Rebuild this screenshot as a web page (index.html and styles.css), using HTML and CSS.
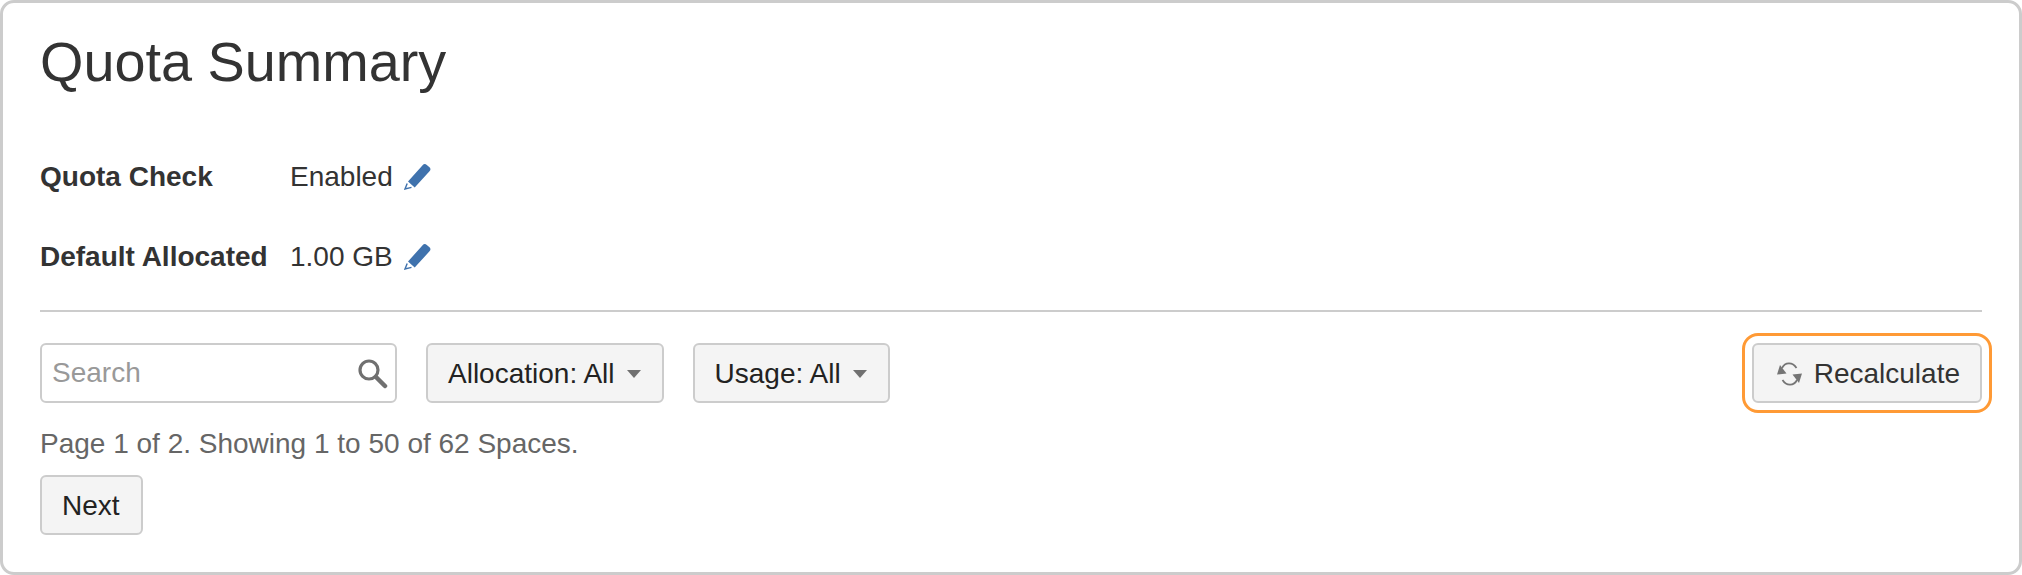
FILE: index.html
```html
<!DOCTYPE html>
<html lang="en">
<head>
  <meta charset="UTF-8" />
  <title>Quota Summary</title>
  <link rel="stylesheet" href="styles.css">
</head>
<body>
  <div class="panel">
    <h1>Quota Summary</h1>

    <div class="settings">
      <div class="setting">
        <span class="label">Quota Check</span>
        <span class="value">Enabled</span>
        <svg class="pencil" viewBox="0 0 27 26"><path d="M4 17.5 18.6 1.3a3 3 0 0 1 4.2-.3l2.4 2a3 3 0 0 1 .3 4.3L10.7 23.6Z" fill="#3f72ad"/><path d="M3.2 19.5 1 25l6.500-1.600" fill="none" stroke="#3f72ad" stroke-width="1.400"/></svg>
      </div>
      <div class="setting">
        <span class="label">Default Allocated</span>
        <span class="value">1.00 GB</span>
        <svg class="pencil" viewBox="0 0 27 26"><path d="M4 17.5 18.6 1.3a3 3 0 0 1 4.2-.3l2.4 2a3 3 0 0 1 .3 4.3L10.7 23.6Z" fill="#3f72ad"/><path d="M3.2 19.5 1 25l6.500-1.600" fill="none" stroke="#3f72ad" stroke-width="1.400"/></svg>
      </div>
    </div>

    <hr>

    <div class="toolbar">
      <div class="search">
        <input type="text" placeholder="Search">
        <svg class="search-icon" viewBox="0 0 30 30"><circle cx="11" cy="11" r="9" fill="none" stroke="#707070" stroke-width="3.200"/><path d="M18 18 27 27" stroke="#707070" stroke-width="4.500" stroke-linecap="round"/></svg>
      </div>
      <button class="btn">Allocation: All<span class="caret"></span></button>
      <button class="btn">Usage: All<span class="caret"></span></button>
      <button class="btn recalc">
        <svg class="refresh" viewBox="0 0 25 24"><path d="M19.500 6C15.500 -0.500 8 0 5 6" fill="none" stroke="#757575" stroke-width="1.700"/><path d="M0 12.500 9.500 11.500 3 3Z" fill="#757575"/><path d="M5.500 18C9.500 24.500 17 24 20 18" fill="none" stroke="#757575" stroke-width="1.700"/><path d="M25 11.500 15.500 12.500 22 21Z" fill="#757575"/></svg>
        Recalculate
      </button>
    </div>

    <p class="page-info">Page 1 of 2. Showing 1 to 50 of 62 Spaces.</p>
    <button class="btn">Next</button>
  </div>
</body>
</html>
```

FILE: styles.css
```css
* {
  box-sizing: border-box;
}
body {
  margin: 0;
  font-family: "Liberation Sans", Arial, sans-serif;
  font-size: 28px;
  color: #333;
  background: white;
}
.panel {
  height: 575px;
  border: 3px solid #ccc;
  border-radius: 14px;
  padding: 0 37px;
}
h1 {
  margin: 0;
  padding-top: 27px;
  font-size: 55.8px;
  font-weight: normal;
  line-height: 64px;
}
.settings {
  margin-top: 43px;
}
.setting {
  display: flex;
  align-items: center;
  height: 80px;
}
.label {
  width: 250px;
  font-weight: bold;
}
.pencil {
  width: 27px;
  height: 26px;
  margin-left: 11px;
}
hr {
  height: 2px;
  margin: 13px 0 31px;
  border: none;
  background: #ccc;
}
.toolbar {
  display: flex;
  gap: 29px;
}
.search {
  position: relative;
  width: 357px;
}
.search input {
  width: 100%;
  height: 60px;
  padding: 0 10px;
  border: 2px solid #ccc;
  border-radius: 6px;
  font: inherit;
  outline: none;
}
.search input::placeholder {
  color: #999;
}
.search-icon {
  position: absolute;
  right: 9px;
  top: 16px;
  width: 30px;
  height: 30px;
}
.btn {
  display: inline-flex;
  align-items: center;
  height: 60px;
  padding: 1px 21px 0 20px;
  border: 2px solid #ccc;
  border-radius: 6px;
  background: #f4f4f4;
  color: #222;
  font: inherit;
}
.caret {
  width: 0;
  height: 0;
  margin-left: 12px;
  border-left: 7.5px solid transparent;
  border-right: 7.5px solid transparent;
  border-top: 8px solid #707070;
}
.recalc {
  margin-left: auto;
  padding: 1px 20px 0 22.5px;
  color: #333;
  outline: 3px solid #ff9a35;
  outline-offset: 7px;
}
.refresh {
  width: 25px;
  height: 24px;
  margin-right: 12px;
}
.page-info {
  margin: 24px 0 14px;
  line-height: 34px;
  color: #666;
}
```
